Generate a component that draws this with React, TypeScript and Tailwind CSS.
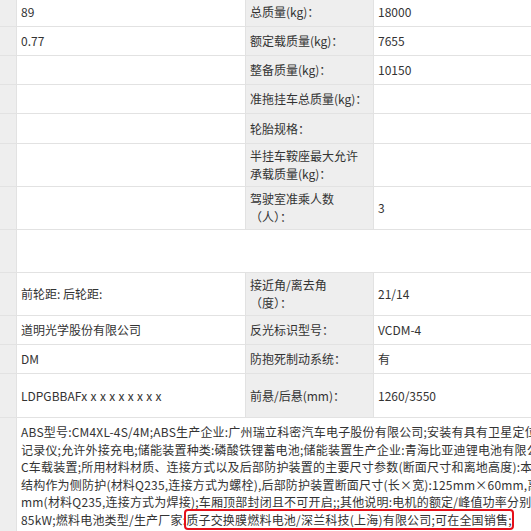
import type { ReactNode } from 'react';

const LABEL = 'bg-[#eeeeee] px-1 flex items-center leading-[18px]';
const VALUE = 'bg-white px-1 flex items-center leading-[18px]';
const SIDE = 'bg-[#eeeeee]';

type Row = {
  left?: ReactNode;
  label: ReactNode;
  value?: ReactNode;
  h: string;
};

const ROWS: Row[] = [
  { left: '89', label: '总质量(kg)：', value: '18000', h: 'h-[29px]' },
  { left: '0.77', label: '额定载质量(kg)：', value: '7655', h: 'h-[28px]' },
  { label: '整备质量(kg)：', value: '10150', h: 'h-[28px]' },
  { label: '准拖挂车总质量(kg)：', h: 'h-[28px]' },
  { label: '轮胎规格：', h: 'h-[29px]' },
  {
    label: (
      <span>
        半挂车鞍座最大允许
        <br />
        承载质量(kg)：
      </span>
    ),
    h: 'h-[42px]',
  },
  {
    label: (
      <span>
        驾驶室准乘人数
        <br />
        （人）：
      </span>
    ),
    value: '3',
    h: 'h-[42px]',
  },
];

const ROWS_LOWER: Row[] = [
  {
    left: '前轮距: 后轮距:',
    label: (
      <span>
        接近角/离去角
        <br />
        （度）：
      </span>
    ),
    value: '21/14',
    h: 'h-[42px]',
  },
  { left: '道明光学股份有限公司', label: '反光标识型号：', value: 'VCDM-4', h: 'h-[28px]' },
  { left: 'DM', label: '防抱死制动系统：', value: '有', h: 'h-[28px]' },
  {
    left: (
      <span>
        LDPGBBAF<span className="tracking-[3.3px]">xxxxxxxxx</span>
      </span>
    ),
    label: '前悬/后悬(mm)：',
    value: '1260/3550',
    h: 'h-[43px]',
  },
];

function TableRow({ row }: { row: Row }) {
  return (
    <>
      <div className={`${SIDE} ${row.h}`} />
      <div className={`${VALUE} ${row.h}`}>{row.left}</div>
      <div className={`${LABEL} ${row.h}`}>{row.label}</div>
      <div className={`${VALUE} ${row.h}`}>{row.value}</div>
    </>
  );
}

// the long remark wraps beyond the visible area; lines are cut at the window edge
const NOTES = [
  'ABS型号:CM4XL-4S/4M;ABS生产企业:广州瑞立科密汽车电子股份有限公司;安装有具有卫星定位',
  '记录仪;允许外接充电;储能装置种类:磷酸铁锂蓄电池;储能装置生产企业:青海比亚迪锂电池有限公司',
  'C车载装置;所用材料材质、连接方式以及后部防护装置的主要尺寸参数(断面尺寸和离地高度):本车',
  '结构作为侧防护(材料Q235,连接方式为螺栓),后部防护装置断面尺寸(长×宽):125mm×60mm,离地',
  'mm(材料Q235,连接方式为焊接);车厢顶部封闭且不可开启;;其他说明:电机的额定/峰值功率分别为',
];

export default function App() {
  return (
    <div className="w-[531px] h-[531px] overflow-hidden bg-white text-[12px] text-[#333333] font-['Noto_Sans_CJK_SC','Microsoft_YaHei',sans-serif]">
      <div className="-mt-[3px] w-[620px] grid grid-cols-[16px_228px_127px_1fr] gap-px bg-[#e2e2e2]">
        {ROWS.map((r, i) => (
          <TableRow key={i} row={r} />
        ))}

        <div className={`${SIDE} h-[42px]`} />
        <div className="col-span-3 bg-white h-[42px]" />

        {ROWS_LOWER.map((r, i) => (
          <TableRow key={i} row={r} />
        ))}

        <div className={SIDE} />
        <div className="col-span-3 bg-white px-1 pt-[5px] pb-4 leading-[17.6px] tracking-[0.2px]">
          {NOTES.map((line, i) => (
            <div key={i} className="whitespace-nowrap">
              {line}
            </div>
          ))}
          <div className="whitespace-nowrap">
            85kW;燃料电池类型/生产厂家:
            <span className="outline-2 outline-[#e5101a] rounded-[2px]">
              质子交换膜燃料电池/深兰科技(上海)有限公司;可在全国销售;
            </span>
          </div>
        </div>
      </div>
    </div>
  );
}
